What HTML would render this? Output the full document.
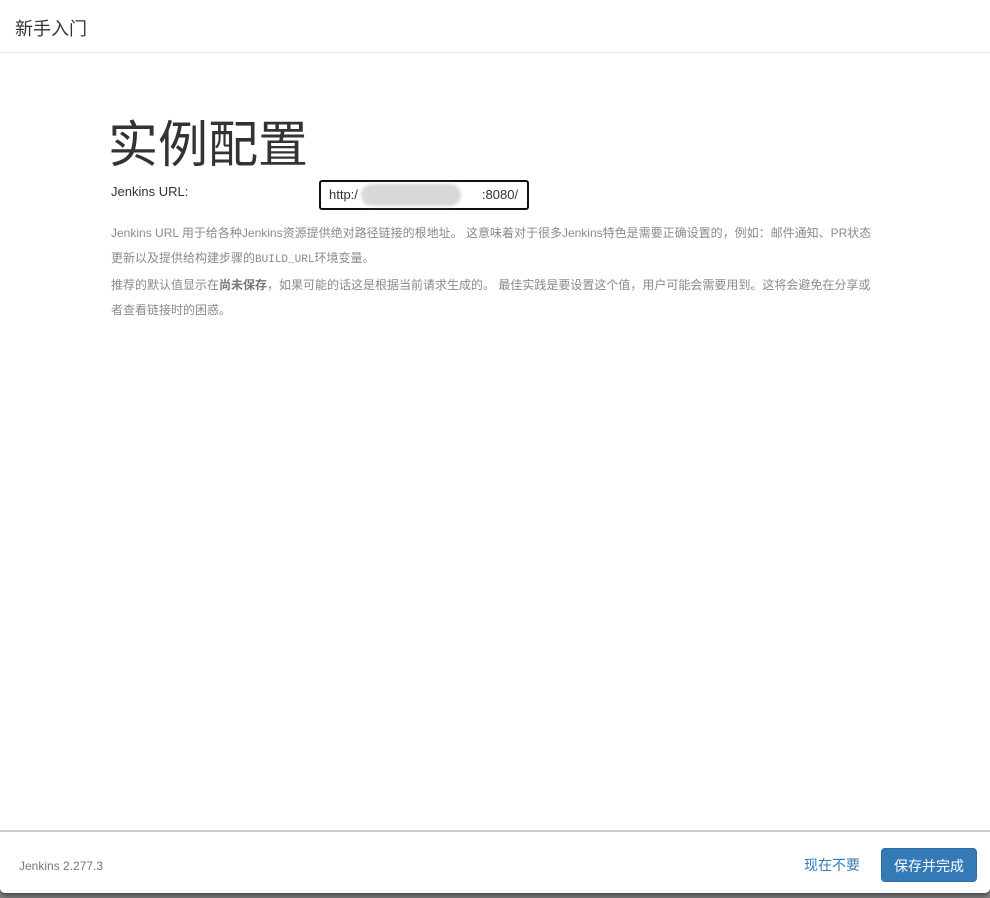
<!DOCTYPE html>
<html><head><meta charset="utf-8"><style>
html,body{margin:0;padding:0;width:990px;height:898px;overflow:hidden;background:#8a8a8a;}
body{font-family:"Liberation Sans","Noto Sans CJK SC",sans-serif;}
.modal{position:absolute;left:0;top:0;width:990px;height:893px;background:#fff;border-radius:0 0 5px 5px;box-shadow:0 3px 6px rgba(0,0,0,.5);}
.hdr{height:53px;border-bottom:1px solid #e5e5e5;box-sizing:border-box;}
.hdr span{position:absolute;left:15px;top:15px;font-size:18px;color:#333;}
h1{position:absolute;left:108px;top:112px;margin:0;font-size:50px;font-weight:400;color:#333;line-height:66px;}
.lbl{position:absolute;left:111px;top:184px;font-size:13px;color:#333;}
.inp{position:absolute;left:319px;top:180px;width:206px;height:26px;border:2px solid #111;border-radius:3px;box-sizing:content-box;}
.inp span{position:absolute;left:8px;top:5px;font-size:13px;color:#333;}
.blur{position:absolute;left:40px;top:2px;width:100px;height:22px;background:#d8d8d8;border-radius:11px;filter:blur(1.5px);}
.help{position:absolute;left:111px;top:221px;width:770px;font-size:12px;color:#8a8a8a;line-height:25px;}
.help b{color:#777;}
.mono{font-family:"Liberation Mono",monospace;font-size:11px;}
.ftr{position:absolute;left:0;top:830px;width:990px;height:63px;border-top:2px solid #ccc;box-sizing:border-box;}
.ver{position:absolute;left:19px;top:27px;font-size:12px;color:#777;}
.skip{position:absolute;left:804px;top:23px;font-size:14px;color:#337ab7;}
.btn{position:absolute;left:881px;top:16px;width:96px;height:34px;background:#337ab7;border:1px solid #2e6da4;border-radius:4px;color:#fff;font-size:14px;text-align:center;line-height:34px;box-sizing:border-box;}
</style></head><body>
<div class="modal">
<div class="hdr"><span>新手入门</span></div>
<h1>实例配置</h1>
<div class="lbl">Jenkins URL:</div>
<div class="inp"><div class="blur"></div><span>http:/<span style="position:static;display:inline-block;width:124px"></span>:8080/</span></div>
<div class="help">Jenkins URL 用于给各种Jenkins资源提供绝对路径链接的根地址。 这意味着对于很多Jenkins特色是需要正确设置的，例如：邮件通知、PR状态更新以及提供给构建步骤的<span class="mono">BUILD_URL</span>环境变量。<br>推荐的默认值显示在<b>尚未保存</b>，如果可能的话这是根据当前请求生成的。 最佳实践是要设置这个值，用户可能会需要用到。这将会避免在分享或者查看链接时的困惑。</div>
<div class="ftr"><span class="ver">Jenkins 2.277.3</span><span class="skip">现在不要</span><div class="btn">保存并完成</div></div>
</div>
</body></html>
